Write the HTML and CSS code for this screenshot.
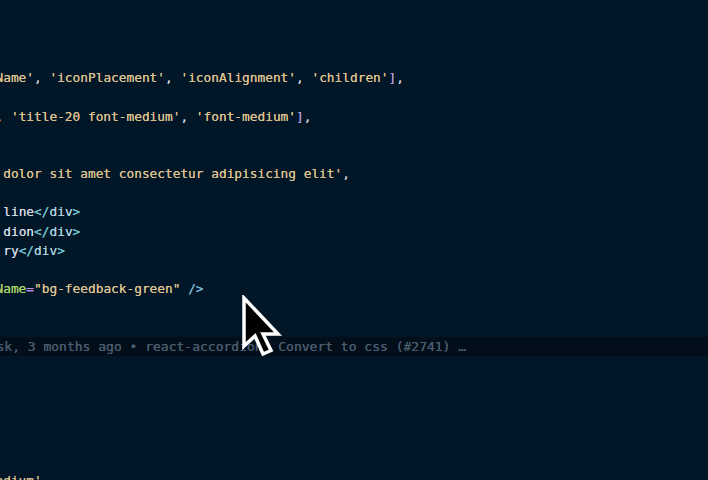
FILE: index.html
```html
<!DOCTYPE html>
<html>
<head>
<meta charset="utf-8">
<link rel="stylesheet" href="styles.css">
</head>
<body>
<div class="editor">
  <div class="line"> </div>
  <div class="line"> </div>
  <div class="line"> </div>
  <div class="line"><span class="str">Name'</span><span class="pun">, </span><span class="str">'iconPlacement'</span><span class="pun">, </span><span class="str">'iconAlignment'</span><span class="pun">, </span><span class="str">'children'</span><span class="brk">]</span><span class="pun">,</span></div>
  <div class="line"> </div>
  <div class="line"><span class="pun">, </span><span class="str">'title-20 font-medium'</span><span class="pun">, </span><span class="str">'font-medium'</span><span class="brk">]</span><span class="pun">,</span></div>
  <div class="line"> </div>
  <div class="line"> </div>
  <div class="line"><span class="str"> dolor sit amet consectetur adipisicing elit'</span><span class="pun">,</span></div>
  <div class="line"> </div>
  <div class="line"> <span class="txt">line</span><span class="tagp">&lt;/</span><span class="tag">div</span><span class="tagp">&gt;</span></div>
  <div class="line"> <span class="txt">dion</span><span class="tagp">&lt;/</span><span class="tag">div</span><span class="tagp">&gt;</span></div>
  <div class="line"> <span class="txt">ry</span><span class="tagp">&lt;/</span><span class="tag">div</span><span class="tagp">&gt;</span></div>
  <div class="line"> </div>
  <div class="line"><span class="attr">Name</span><span class="eq">=</span><span class="str">"bg-feedback-green"</span> <span class="self">/&gt;</span></div>
  <div class="line"> </div>
  <div class="line"> </div>
  <div class="line current"><span class="blame">sk, 3 months ago • react-accordion: Convert to css (#2741) …</span></div>
  <div class="line"> </div>
  <div class="line"> </div>
  <div class="line"> </div>
  <div class="line"> </div>
  <div class="line"> </div>
  <div class="line"> </div>
  <div class="line"><span class="str">edium'</span></div>
</div>
<svg class="cursor" width="42" height="64" viewBox="0 0 42 64" aria-hidden="true">
  <polygon points="3,3 3,51 14,41 22,59 30,55.5 22,39 37,39" fill="#000" stroke="#fff" stroke-width="3.5" stroke-linejoin="miter"/>
</svg>
</body>
</html>
```
FILE: styles.css
```css
html, body {
  margin: 0;
  padding: 0;
  height: 100%;
  background: #011627;
  overflow: hidden;
}

.editor {
  padding-top: 10.6px;
  margin-left: -4.5px;
  font-family: "DejaVu Sans Mono", "Liberation Mono", monospace;
  font-size: 12.8px;
  line-height: 19.2px;
  color: #d6deeb;
  text-shadow: 0 0 0.4px currentColor;
}

.line {
  height: 19.2px;
  white-space: pre;
}

.current {
  background: #020f1b;
}

.str { color: #dcc08e; }
.pun { color: #c9d1dc; }
.brk { color: #ad9bd6; }
.txt { color: #d0d8e4; }
.tagp { color: #6fc3cf; }
.tag { color: #a9cfdc; }
.attr { color: #a9cf66; }
.eq { color: #c792ea; }
.self { color: #78b6d8; }

.blame {
  color: #4a5d6f;
  font-size: 13px;
  padding-left: 1px;
}

.cursor {
  position: absolute;
  left: 241px;
  top: 295px;
}
```
